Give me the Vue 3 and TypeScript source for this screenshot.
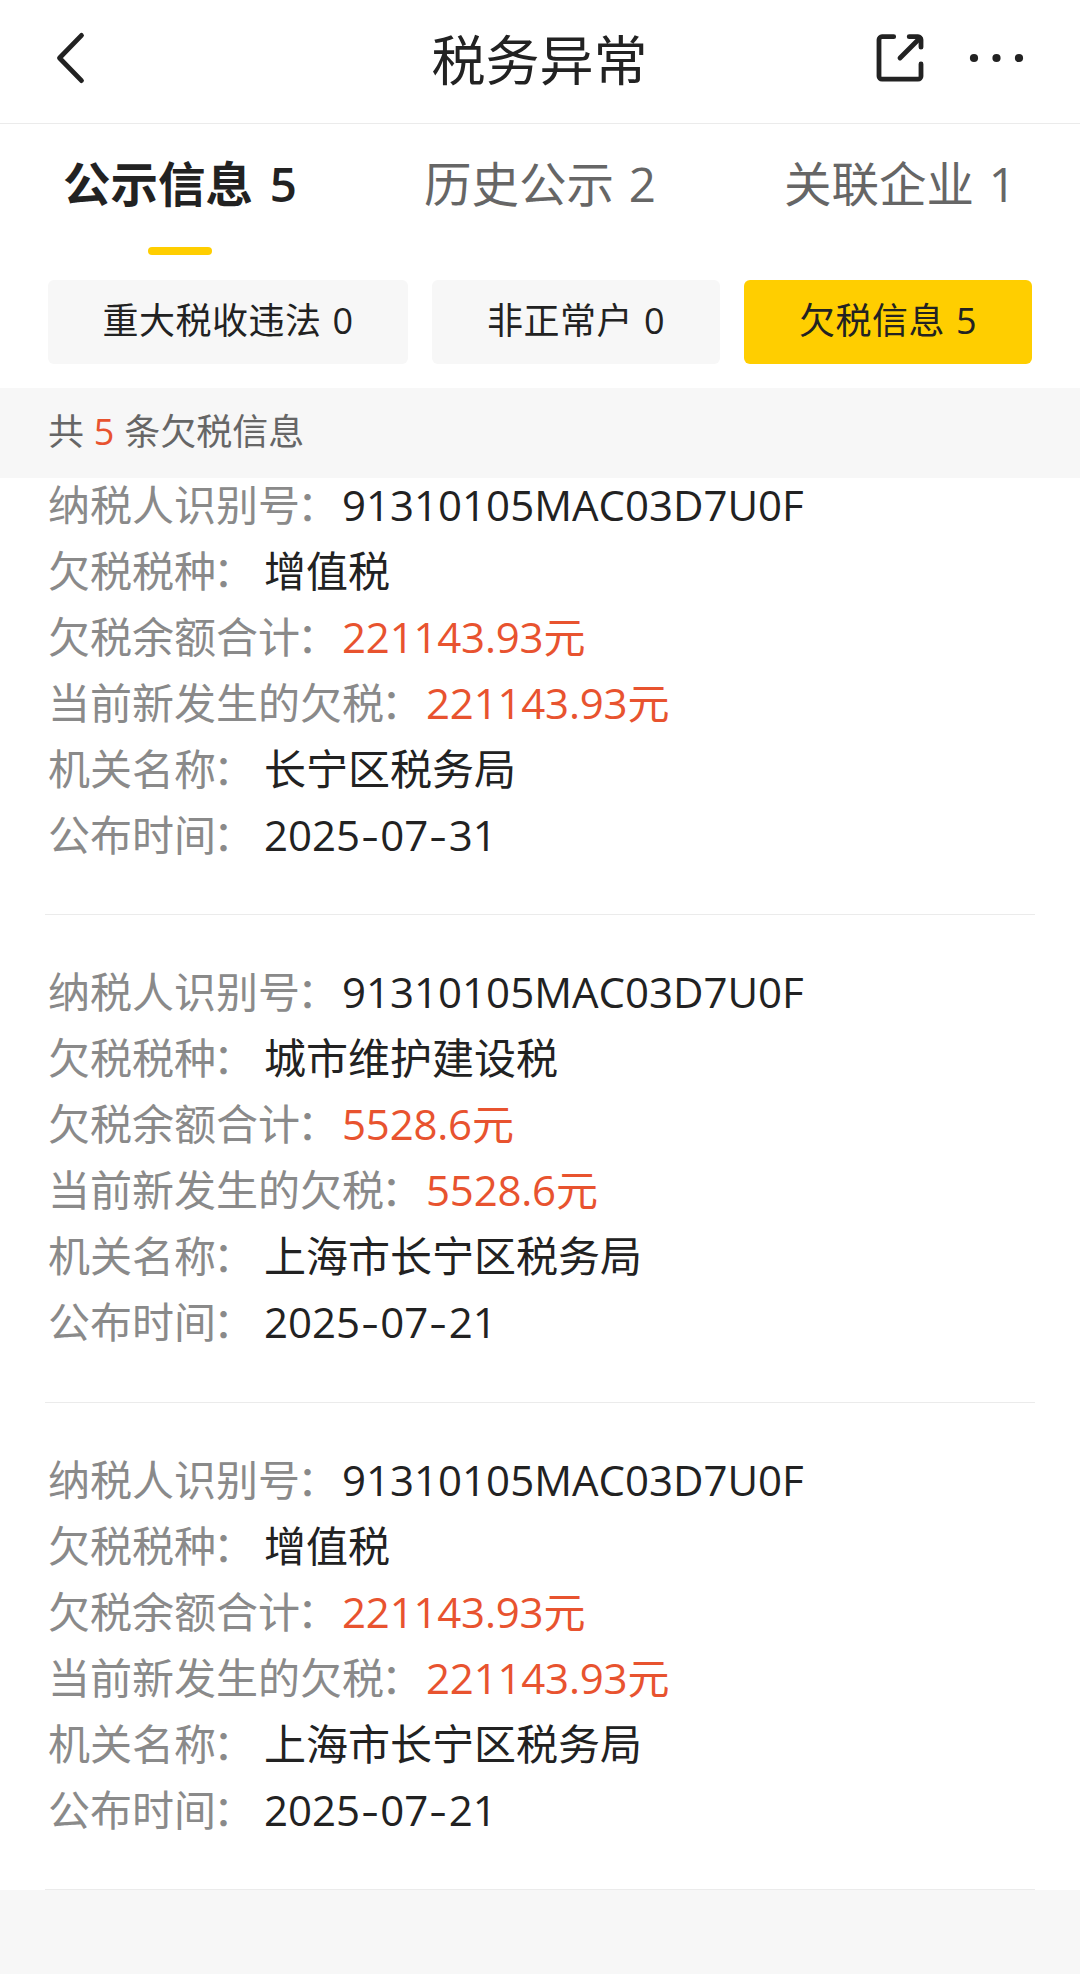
<script setup lang="ts">
interface Field {
  label: string
  value: string
  alert?: boolean
}

interface Tab {
  name: string
  count: number
  active?: boolean
}

const tabs: Tab[] = [
  { name: '公示信息', count: 5, active: true },
  { name: '历史公示', count: 2 },
  { name: '关联企业', count: 1 },
]

const filters: Tab[] = [
  { name: '重大税收违法', count: 0 },
  { name: '非正常户', count: 0 },
  { name: '欠税信息', count: 5, active: true },
]

function record(kind: string, amount: string, office: string, date: string): Field[] {
  return [
    { label: '纳税人识别号', value: '91310105MAC03D7U0F' },
    { label: '欠税税种', value: kind },
    { label: '欠税余额合计', value: amount, alert: true },
    { label: '当前新发生的欠税', value: amount, alert: true },
    { label: '机关名称', value: office },
    { label: '公布时间', value: date },
  ]
}

const records: Field[][] = [
  record('增值税', '221143.93元', '长宁区税务局', '2025-07-31'),
  record('城市维护建设税', '5528.6元', '上海市长宁区税务局', '2025-07-21'),
  record('增值税', '221143.93元', '上海市长宁区税务局', '2025-07-21'),
]

// Hyphens get their own box so that dates keep an even rhythm.
const pieces = (value: string): string[] => value.split(/(-)/)
</script>

<template>
  <div class="page">
    <header class="nav">
      <svg class="back" viewBox="0 0 48 60" aria-label="返回">
        <path d="M35.5 7.4 L13.5 30 L35.5 52.6" />
      </svg>
      <h1>税务异常</h1>
      <div class="actions">
        <svg class="share" viewBox="0 0 52 52">
          <path d="M18.7 4.7H7A3 3 0 0 0 4 7.7V44.2A3 3 0 0 0 7 47.2H43A3 3 0 0 0 46 44.2V32" />
          <path d="M34.2 4.7H43A3 3 0 0 1 46 7.7V15.2" />
          <path d="M25 26L45 6" />
        </svg>
        <svg class="more" viewBox="0 0 56 12">
          <circle cx="6" cy="6" r="4.1" />
          <circle cx="28.5" cy="6" r="4.1" />
          <circle cx="51" cy="6" r="4.1" />
        </svg>
      </div>
    </header>

    <nav class="tabs">
      <div v-for="t in tabs" :key="t.name" class="tab" :class="{ active: t.active }">
        <span>{{ t.name }} {{ t.count }}</span>
      </div>
    </nav>

    <div class="filters">
      <div v-for="f in filters" :key="f.name" class="chip" :class="{ active: f.active }">
        {{ f.name }} {{ f.count }}
      </div>
    </div>

    <div class="summary">共 <b>5</b> 条欠税信息</div>

    <main class="list">
      <section v-for="(r, i) in records" :key="i" class="record">
        <div v-for="f in r" :key="f.label" class="row">
          <span class="label">{{ f.label }}<span class="colon">：</span></span>
          <span class="value" :class="{ alert: f.alert }"><span v-for="(p, k) in pieces(f.value)" :key="k" :class="{ hyphen: p === '-' }">{{ p }}</span></span>
        </div>
      </section>
    </main>
  </div>
</template>

<style>
body {
  margin: 0;
  background: #f7f7f7;
}
</style>

<style scoped>
.page {
  width: 1080px;
  height: 1974px;
  overflow: hidden;
  background: #f7f7f7;
  color: #222;
  font-family: 'Open Sans', 'Noto Sans CJK SC', sans-serif;
}

.nav {
  display: grid;
  grid-template-columns: 1fr auto 1fr;
  align-items: center;
  box-sizing: border-box;
  height: 124px;
  padding: 0 47px 7px 46px;
  border-bottom: 1px solid #ebebeb;
  background: #fff;
}

.nav svg {
  display: block;
  fill: none;
  stroke: #222;
  stroke-width: 4.8;
  stroke-linecap: round;
  stroke-linejoin: round;
}

.nav .back {
  width: 48px;
  height: 60px;
}

h1 {
  margin: 0;
  padding-top: 3px;
  font-size: 54px;
  font-weight: 400;
  line-height: 60px;
}

.actions {
  display: flex;
  justify-content: flex-end;
  align-items: center;
  gap: 40.5px;
}

.nav .share {
  width: 52px;
  height: 52px;
}

.nav .more {
  width: 56px;
  height: 12px;
  margin-right: 9.5px;
  fill: #222;
  stroke: none;
}

.tabs {
  display: flex;
  height: 156px;
  background: #fff;
}

.tab {
  display: flex;
  flex: 1;
  flex-direction: column;
  align-items: center;
  justify-content: space-between;
  box-sizing: border-box;
  height: 131px;
  padding-top: 27px;
  color: #666;
  font-size: 47.5px;
  line-height: 66px;
  word-spacing: 2.5px;
}

.tab.active {
  color: #222;
  font-weight: 600;
  word-spacing: 4.5px;
}

.tab.active::after {
  content: '';
  width: 64px;
  height: 8px;
  border-radius: 4px;
  background: #ffce00;
}

.filters {
  display: flex;
  gap: 24px;
  height: 108px;
  padding: 0 48px;
  background: #fff;
}

.chip {
  flex: 288 0 0;
  height: 84px;
  border-radius: 6px;
  background: #f7f7f7;
  font-size: 36px;
  letter-spacing: 0.5px;
  word-spacing: 1px;
  line-height: 82px;
  text-align: center;
  white-space: nowrap;
}

.chip:first-child {
  flex-grow: 360;
}

.chip.active {
  background: #ffce00;
}

.summary {
  height: 90px;
  padding-left: 48px;
  color: #666;
  font-size: 36px;
  word-spacing: 0.5px;
  line-height: 88px;
}

.summary b {
  color: #e8532f;
  font-weight: 400;
}

.list {
  background: #fff;
}

.record {
  box-sizing: border-box;
  height: 487.5px;
  margin: 0 45px;
  padding: 44px 3px 0;
  border-bottom: 1px solid #ebebeb;
}

.row {
  display: flex;
  height: 66px;
  font-size: 42px;
  line-height: 66px;
  white-space: nowrap;
}

/* The first record sits partly scrolled up against the summary bar. */
.record:first-child {
  height: 437px;
  padding-top: 0;
}

.record:first-child .row:first-child {
  height: 60px;
  line-height: 54px;
}

.label {
  min-width: 216px;
  color: #8a8a8a;
}

.colon {
  margin: 0 3px 0 -3px;
}

.alert {
  color: #e8532f;
  letter-spacing: -0.2px;
}

.hyphen {
  display: inline-block;
  width: 20.3px;
  text-align: center;
  transform: scaleX(1.3);
}
</style>
